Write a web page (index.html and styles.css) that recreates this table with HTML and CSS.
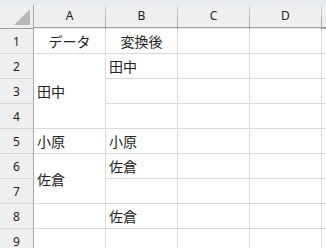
FILE: index.html
```html
<!DOCTYPE html>
<html lang="ja">
<head>
<meta charset="utf-8">
<title>Sheet1</title>
<link rel="stylesheet" href="styles.css">
</head>
<body>
<div class="ribbon-edge"></div>
<div class="sheet">
  <!-- column headers -->
  <div class="corner"><span class="corner-tri"></span></div>
  <div class="col-head">A</div>
  <div class="col-head">B</div>
  <div class="col-head">C</div>
  <div class="col-head">D</div>
  <div class="col-head tail"></div>

  <!-- row 1 -->
  <div class="row-head">1</div>
  <div class="cell center">データ</div>
  <div class="cell center">変換後</div>
  <div class="cell"></div>
  <div class="cell"></div>
  <div class="cell tail"></div>

  <!-- rows 2-4 -->
  <div class="row-head">2</div>
  <div class="cell span3">田中</div>
  <div class="cell">田中</div>
  <div class="cell"></div>
  <div class="cell"></div>
  <div class="cell tail"></div>

  <div class="row-head">3</div>
  <div class="cell"></div>
  <div class="cell"></div>
  <div class="cell"></div>
  <div class="cell tail"></div>

  <div class="row-head">4</div>
  <div class="cell"></div>
  <div class="cell"></div>
  <div class="cell"></div>
  <div class="cell tail"></div>

  <!-- row 5 -->
  <div class="row-head">5</div>
  <div class="cell">小原</div>
  <div class="cell">小原</div>
  <div class="cell"></div>
  <div class="cell"></div>
  <div class="cell tail"></div>

  <!-- rows 6-7 -->
  <div class="row-head">6</div>
  <div class="cell span2">佐倉</div>
  <div class="cell">佐倉</div>
  <div class="cell"></div>
  <div class="cell"></div>
  <div class="cell tail"></div>

  <div class="row-head">7</div>
  <div class="cell"></div>
  <div class="cell"></div>
  <div class="cell"></div>
  <div class="cell tail"></div>

  <!-- row 8 -->
  <div class="row-head">8</div>
  <div class="cell"></div>
  <div class="cell">佐倉</div>
  <div class="cell"></div>
  <div class="cell"></div>
  <div class="cell tail"></div>

  <!-- row 9 -->
  <div class="row-head">9</div>
  <div class="cell"></div>
  <div class="cell"></div>
  <div class="cell"></div>
  <div class="cell"></div>
  <div class="cell tail"></div>
</div>
</body>
</html>
```

FILE: styles.css
```css
html, body {
  margin: 0;
  padding: 0;
  background: #ffffff;
  overflow: hidden;
}

.ribbon-edge {
  height: 5px;
  background: #e7ebef;
}

.sheet {
  display: grid;
  grid-template-columns: 34px 72px 72px 72px 72px 1fr;
  grid-template-rows: 24px repeat(9, 25px);
}

.corner,
.col-head,
.row-head,
.cell {
  box-sizing: border-box;
}

.corner {
  position: relative;
  background: #efefef;
  border-right: 1px solid #a8a8a8;
  border-bottom: 1px solid #9c9c9c;
}

.corner-tri {
  position: absolute;
  left: 14px;
  top: 4px;
  width: 0;
  height: 0;
  border-left: 16px solid transparent;
  border-bottom: 16px solid #b8b8b8;
}

.col-head {
  display: flex;
  align-items: center;
  justify-content: center;
  background: #efefef;
  border-bottom: 1px solid #9c9c9c;
  border-right: 1px solid transparent;
  border-image: linear-gradient(to bottom, #dcdcdc, #9a9a9a) 1;
  border-image-width: 0 1px 0 0;
  font-family: "Noto Sans", "Open Sans", sans-serif;
  font-size: 12px;
  color: #222222;
  padding-bottom: 2px;
  box-shadow: inset 0 -1px 0 #9c9c9c;
}

.col-head.tail {
  border-image: none;
  border-right: none;
}

.row-head {
  display: flex;
  align-items: center;
  justify-content: center;
  background: #efefef;
  border-right: 1px solid #a8a8a8;
  border-bottom: 1px solid #d4d4d4;
  font-family: "Noto Sans", "Open Sans", sans-serif;
  font-size: 12px;
  color: #222222;
}

.cell {
  display: flex;
  align-items: center;
  padding-left: 3px;
  border-right: 1px solid #dadada;
  border-bottom: 1px solid #dadada;
  font-family: "Noto Sans CJK JP", "Noto Sans", sans-serif;
  font-size: 14px;
  color: #222222;
  white-space: nowrap;
  overflow: hidden;
}

.cell.center {
  justify-content: center;
  padding-left: 0;
}

.cell.tail {
  border-right: none;
}

.span3 {
  grid-row: span 3;
}

.span2 {
  grid-row: span 2;
}
```
